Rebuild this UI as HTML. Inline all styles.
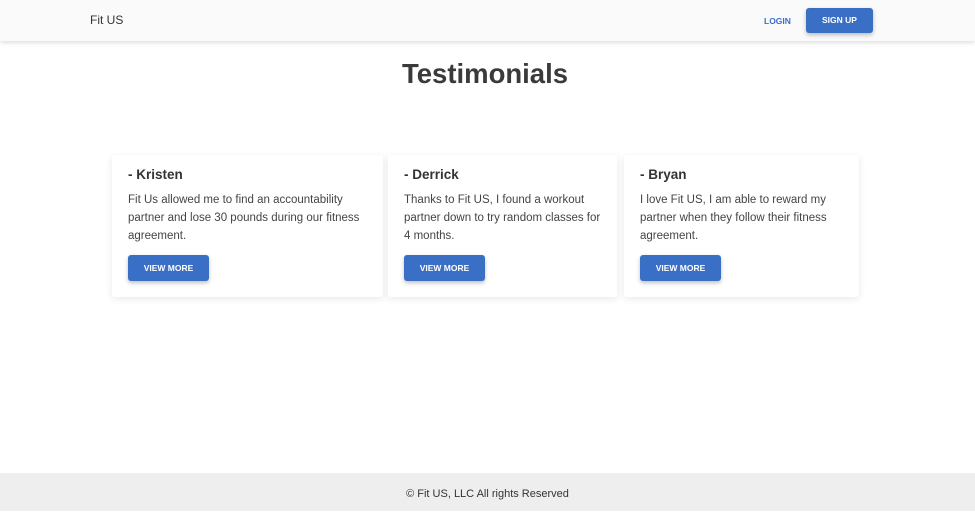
<!DOCTYPE html>
<html><head><style>
*{margin:0;padding:0;box-sizing:border-box}
body{width:975px;height:511px;background:#fff;font-family:"Liberation Sans",Arial,sans-serif;color:#333;position:relative;overflow:hidden}
.hdr{position:absolute;left:0;top:0;width:975px;height:41px;background:#fafafa;box-shadow:0 2px 4px rgba(0,0,0,.12)}
.logo{position:absolute;left:90px;top:13px;font-size:12px;color:#333}
.login{position:absolute;left:764px;top:16px;font-size:8.5px;font-weight:bold;color:#3a6fc6}
.btn{position:absolute;background:#3a6fc6;color:#fff;font-size:8.5px;font-weight:bold;border-radius:3px;box-shadow:0 2px 4px rgba(0,0,0,.25);text-align:center}
h1{position:absolute;left:0;width:970px;top:58px;text-align:center;font-size:27.5px;font-weight:bold;color:#3a3a3a}
.card{position:absolute;top:155px;height:142px;background:#fff;box-shadow:0 2px 8px rgba(0,0,0,.09);border-radius:3px}
.card h3{position:absolute;left:16px;top:12px;font-size:13.5px;font-weight:bold;color:#333}
.card p{position:absolute;left:16px;top:36px;font-size:11.5px;line-height:18px;color:#444;width:230px}
.card .btn{left:16px;top:100px;width:81px;height:26px;line-height:26px}
.ftr{position:absolute;left:0;top:473px;width:975px;height:38px;background:#eee;text-align:center;font-size:11px;line-height:42px;color:#333}
</style></head><body>
<div class="hdr"><div class="logo">Fit US</div><div class="login">LOGIN</div>
<div class="btn" style="left:806px;top:8px;width:67px;height:25px;line-height:25px">SIGN UP</div></div>
<h1>Testimonials</h1>
<div class="card" style="left:112px;width:271px"><h3>- Kristen</h3><p style="width:250px">Fit Us allowed me to find an accountability partner and lose 30 pounds during our fitness agreement.</p><div class="btn">VIEW MORE</div></div>
<div class="card" style="left:388px;width:229px"><h3>- Derrick</h3><p style="width:205px">Thanks to Fit US, I found a workout partner down to try random classes for 4 months.</p><div class="btn">VIEW MORE</div></div>
<div class="card" style="left:624px;width:235px"><h3>- Bryan</h3><p style="width:200px">I love Fit US, I am able to reward my partner when they follow their fitness agreement.</p><div class="btn">VIEW MORE</div></div>
<div class="ftr">© Fit US, LLC All rights Reserved</div>
</body></html>
